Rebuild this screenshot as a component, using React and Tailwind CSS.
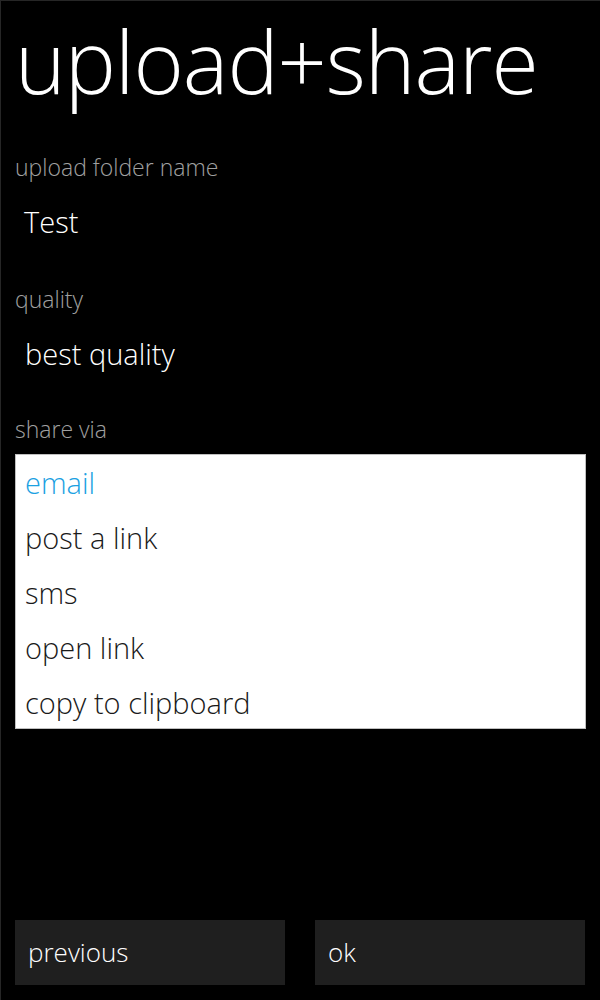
const items = ['email', 'post a link', 'sms', 'open link', 'copy to clipboard'];

export default function App() {
  return (
    <div className="flex h-[1000px] w-[600px] flex-col border-l border-t border-[#262626] bg-black font-['Open_Sans',sans-serif] text-white">
      <h1 className="ml-[14px] mt-[0px] h-[151px] text-[86px] font-light leading-[120px] tracking-[-1px]">
        upload+share
      </h1>

      <div className="px-[14px]">
        <div className="text-[23px] font-light leading-[30px] text-[#a0a0a0]">upload folder name</div>
        <div className="mt-[20px] pl-[9px] text-[29px] font-light leading-[40px]">Test</div>

        <div className="mt-[42px] text-[23px] font-light leading-[30px] text-[#a0a0a0]">quality</div>
        <div className="mt-[20px] pl-[10px] text-[29px] font-light leading-[40px]">best quality</div>

        <div className="mt-[40px] text-[23px] font-light leading-[30px] text-[#a0a0a0]">share via</div>
        <ul className="mt-[10px] h-[275px] border border-[#bfbfbf] bg-white pt-[5px]">
          {items.map((it, i) => (
            <li
              key={it}
              className={`h-[55px] pl-[9px] text-[29px] font-light leading-[46px] ${i === 0 ? 'text-[#1ba1e2]' : 'text-[#1a1a1a]'}`}
            >
              {it}
            </li>
          ))}
        </ul>
      </div>

      <div className="mt-auto mb-[15px] flex gap-[30px] pl-[14px] pr-[15px]">
        <button type="button" className="h-[65px] flex-1 bg-[#1f1f1f] pl-[13px] text-left text-[26px] font-light">
          previous
        </button>
        <button type="button" className="h-[65px] flex-1 bg-[#1f1f1f] pl-[13px] text-left text-[26px] font-light">
          ok
        </button>
      </div>
    </div>
  );
}
